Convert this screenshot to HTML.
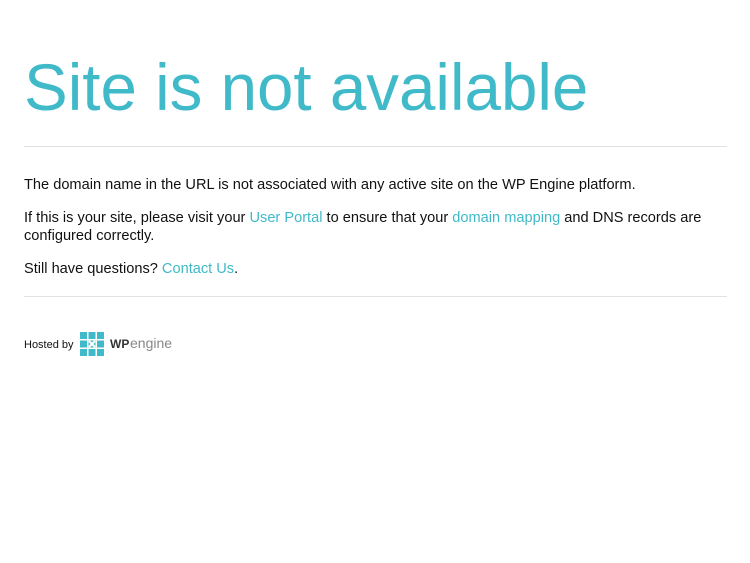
<!DOCTYPE html>
<html><head><meta charset="utf-8"><style>
body{margin:0;background:#fff;font-family:"Liberation Sans",sans-serif;color:#111;}
.w{position:absolute;left:24px;width:703px;top:0}
h1{position:absolute;top:50px;left:0;margin:0;font-weight:normal;font-size:65.5px;line-height:76px;color:#40bac8;white-space:nowrap}
hr{position:absolute;left:0;width:703px;margin:0;border:0;border-top:1px solid #e2e2e2}
p{position:absolute;left:0;margin:0;font-size:14.6px;line-height:18px;width:703px}
a{color:#40bac8;text-decoration:none}
.h{position:absolute;top:339px;left:0;font-size:11px}
</style></head><body><div class="w">
<h1>Site is not available</h1>
<hr style="top:146px">
<p style="top:176px">The domain name in the URL is not associated with any active site on the WP Engine platform.</p>
<p style="top:209px">If this is your site, please visit your <a>User Portal</a> to ensure that your <a>domain mapping</a> and DNS records are<br>configured correctly.</p>
<p style="top:260px">Still have questions? <a>Contact Us</a>.</p>
<hr style="top:296px">
<span class="h">Hosted by</span>
<svg style="position:absolute;left:56px;top:332px" width="100" height="24" viewBox="0 0 100 24">
<g fill="#40bac8">
<rect x="0" y="0" width="7" height="7"/><rect x="8.5" y="0" width="7" height="7"/><rect x="17" y="0" width="7" height="7"/>
<rect x="0" y="8.5" width="7" height="7"/><rect x="17" y="8.5" width="7" height="7"/>
<rect x="0" y="17" width="7" height="7"/><rect x="8.5" y="17" width="7" height="7"/><rect x="17" y="17" width="7" height="7"/>
<rect x="8.5" y="8.5" width="7" height="7"/>
</g>
<path d="M9 9l6 6M15 9l-6 6" stroke="#fff" stroke-width="2"/>
<text x="30" y="16" font-family="Liberation Sans" font-weight="bold" font-size="12" fill="#333">WP</text>
<text x="50" y="16" font-family="Liberation Sans" font-size="14" fill="#888">engine</text>
</svg>
</div></body></html>
